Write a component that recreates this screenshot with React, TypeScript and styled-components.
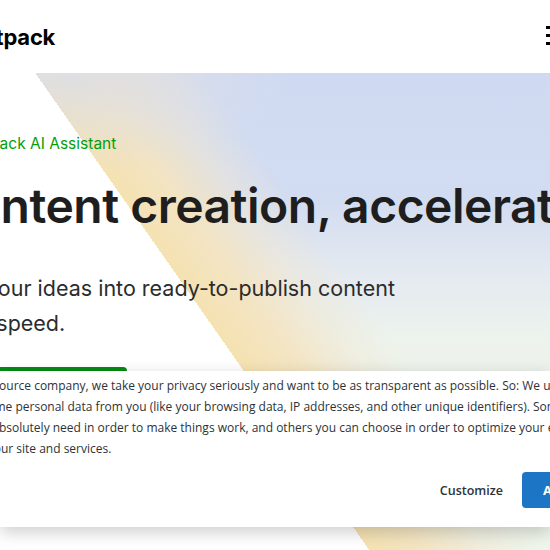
import React from 'react';
import styled, { createGlobalStyle } from 'styled-components';

const GlobalStyle = createGlobalStyle`
  html, body {
    margin: 0;
    padding: 0;
    background: #fff;
    overflow: hidden;
  }
  body {
    font-family: Inter, "Noto Sans", Arial, sans-serif;
    -webkit-font-smoothing: antialiased;
  }
`;

const Page = styled.div`
  position: relative;
  width: 550px;
  height: 550px;
  overflow: hidden;
  background: #fff;
`;

const Header = styled.header`
  height: 73px;
  display: flex;
  align-items: center;
  justify-content: space-between;
`;

const Logo = styled.a`
  display: flex;
  align-items: center;
  gap: 8px;
  margin-left: -70px;
  font-size: 22px;
  font-weight: 700;
  letter-spacing: -0.2px;
  color: #000;
  text-decoration: none;
`;

const MenuButton = styled.button`
  display: flex;
  flex-direction: column;
  gap: 5.5px;
  width: 20px;
  padding: 0;
  margin-top: -2px;
  margin-right: -16px;
  background: none;
  border: none;
  cursor: pointer;

  span {
    display: block;
    height: 2.5px;
    background: #000;
  }
`;

const Hero = styled.section`
  height: 480px;
  padding-top: 59px;
  box-sizing: border-box;
  background:
    linear-gradient(55deg, #fff 41.9%, rgba(255, 255, 255, 0) 41.9%),
    radial-gradient(ellipse 220px 100px at 70px 0, rgba(222, 223, 228, 1) 0%, rgba(222, 223, 228, 0) 100%),
    linear-gradient(55deg, rgba(245, 226, 178, 1) 41.9%, rgba(244, 228, 192, 0.95) 48%, rgba(241, 231, 210, 0.5) 55%, rgba(240, 234, 220, 0) 61%),
    linear-gradient(to bottom, #cfdaf2 0%, #d2dcf1 26%, #e4eaf0 42%, #edf3ec 56%, #eef5ea 100%);
`;

const HeroContent = styled.div`
  margin-left: -66px;
  white-space: nowrap;
`;

const Eyebrow = styled.div`
  display: flex;
  align-items: center;
  gap: 9px;
  margin: 0 0 20px;
  font-size: 15.5px;
  line-height: 24px;
  color: #069e08;
`;

const Title = styled.h1`
  margin: 1px 0 35px 3px;
  font-size: 48px;
  line-height: 60px;
  font-weight: 600;
  letter-spacing: -0.5px;
  color: #1e1e1e;
`;

const Subtitle = styled.p`
  margin: 0 0 26px;
  font-size: 21.5px;
  line-height: 35px;
  color: #2c2c2c;
`;

const PrimaryButton = styled.a`
  display: inline-flex;
  align-items: center;
  justify-content: center;
  width: 193px;
  height: 48px;
  border-radius: 4px;
  background: #048a14;
  color: #fff;
  font-size: 16px;
  font-weight: 600;
  text-decoration: none;
`;

const CookieBanner = styled.div`
  position: absolute;
  top: 371px;
  left: 0;
  right: 0;
  height: 156px;
  background: #fff;
  box-shadow: 0 5px 16px rgba(0, 0, 0, 0.2);
  font-family: "Open Sans", "Noto Sans", Arial, sans-serif;
`;

const BannerInner = styled.div`
  width: 715px;
  margin-left: -72px;
  padding: 4px 0 0;
`;

const BannerText = styled.p`
  margin: 0;
  font-size: 12px;
  line-height: 21px;
  color: #2c3338;
  white-space: nowrap;
`;

const BannerActions = styled.div`
  display: flex;
  justify-content: flex-end;
  align-items: center;
  gap: 19px;
  margin-top: 13px;
  padding-right: 16px;
`;

const TextButton = styled.button`
  background: none;
  border: none;
  padding: 0;
  font-family: inherit;
  font-size: 12.5px;
  font-weight: 600;
  color: #2c3338;
  cursor: pointer;
`;

const AcceptButton = styled.button`
  height: 36px;
  padding: 0 21px;
  border: none;
  border-radius: 4px;
  background: #1d75c5;
  color: #fff;
  font-family: inherit;
  font-size: 13px;
  font-weight: 700;
  cursor: pointer;
`;

const JetpackMark = ({ size }: { size: number }) => (
  <svg width={size} height={size} viewBox="0 0 32 32" aria-hidden="true">
    <circle cx="16" cy="16" r="16" fill="#069e08" />
    <polygon points="15,19 7,19 15,3" fill="#fff" />
    <polygon points="17,29 17,13 25,13" fill="#fff" />
  </svg>
);

const Sparkle = () => (
  <svg width="24" height="24" viewBox="0 0 24 24" aria-hidden="true">
    <path d="M12 2l2.2 6.8L21 11l-6.8 2.2L12 20l-2.2-6.8L3 11l6.8-2.2z" fill="#069e08" />
  </svg>
);

const App: React.FC = () => {
  return (
    <Page>
      <GlobalStyle />
      <Header>
        <Logo href="#">
          <JetpackMark size={32} />
          Jetpack
        </Logo>
        <MenuButton aria-label="Menu">
          <span />
          <span />
          <span />
        </MenuButton>
      </Header>

      <Hero>
        <HeroContent>
          <Eyebrow>
            <Sparkle />
            Jetpack AI Assistant
          </Eyebrow>
          <Title>Content creation, accelerated.</Title>
          <Subtitle>
            Turn your ideas into ready-to-publish content
            <br />
            at full speed.
          </Subtitle>
          <PrimaryButton href="#">Get Jetpack AI</PrimaryButton>
        </HeroContent>
      </Hero>

      <CookieBanner>
        <BannerInner>
          <BannerText>
            As an open source company, we take your privacy seriously and want to be as transparent as possible. So: We use cookies
            <br />
            to collect some personal data from you (like your browsing data, IP addresses, and other unique identifiers). Some of these
            <br />
            cookies we absolutely need in order to make things work, and others you can choose in order to optimize your experience
            <br />
            while using our site and services.
          </BannerText>
          <BannerActions>
            <TextButton>Customize</TextButton>
            <AcceptButton>Accept all</AcceptButton>
          </BannerActions>
        </BannerInner>
      </CookieBanner>
    </Page>
  );
};

export default App;
